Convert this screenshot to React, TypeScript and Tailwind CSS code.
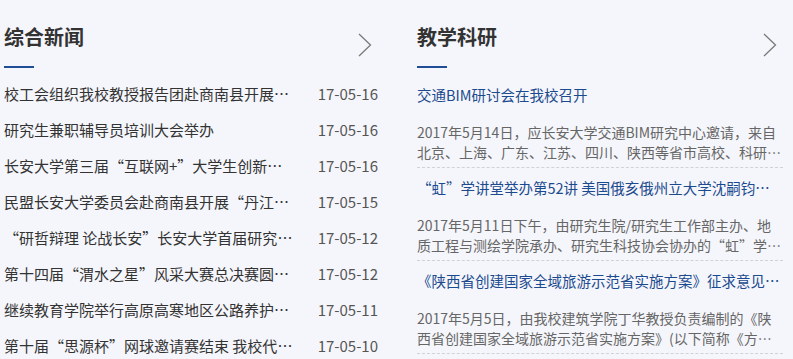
const news = [
  { title: '校工会组织我校教授报告团赴商南县开展送教下乡活动', date: '17-05-16' },
  { title: '研究生兼职辅导员培训大会举办', date: '17-05-16' },
  { title: '长安大学第三届“互联网+”大学生创新创业大赛启动', date: '17-05-16' },
  { title: '民盟长安大学委员会赴商南县开展“丹江情”活动', date: '17-05-15' },
  { title: '“研哲辩理 论战长安”长安大学首届研究生辩论赛', date: '17-05-12' },
  { title: '第十四届“渭水之星”风采大赛总决赛圆满落幕', date: '17-05-12' },
  { title: '继续教育学院举行高原高寒地区公路养护培训班', date: '17-05-11' },
  { title: '第十届“思源杯”网球邀请赛结束 我校代表队获佳绩', date: '17-05-10' },
]

const research = [
  {
    title: '交通BIM研讨会在我校召开',
    desc: '2017年5月14日，应长安大学交通BIM研究中心邀请，来自北京、上海、广东、江苏、四川、陕西等省市高校、科研院所及企业的专家学者齐聚我校',
  },
  {
    title: '“虹”学讲堂举办第52讲 美国俄亥俄州立大学沈嗣钧教授来校讲学',
    desc: '2017年5月11日下午，由研究生院/研究生工作部主办、地质工程与测绘学院承办、研究生科技协会协办的“虹”学讲堂第52讲在我校举行',
  },
  {
    title: '《陕西省创建国家全域旅游示范省实施方案》征求意见稿论证会召开',
    desc: '2017年5月5日，由我校建筑学院丁华教授负责编制的《陕西省创建国家全域旅游示范省实施方案》(以下简称《方案》)征求意见稿论证会召开',
  },
]

const Chevron = () => (
  <svg width="14" height="24" viewBox="0 0 14 24" className="mt-[9px] mr-[6px] shrink-0">
    <polyline points="1,1 12.5,12 1,23" fill="none" stroke="#7a7a7a" strokeWidth="1.3" />
  </svg>
)

const Header = ({ label }: { label: string }) => (
  <div>
    <div className="flex h-[26px] items-start justify-between mt-[24px]">
      <h2 className="text-[20px] leading-[26px] font-bold text-[#333]">{label}</h2>
      <Chevron />
    </div>
    <div className="mt-[16px] h-[2px] w-[30px] bg-[#1f4e96]" />
  </div>
)

export default function App() {
  return (
    <div
      className="flex h-[359px] w-[793px] overflow-hidden bg-[#f5f6fb] pl-[4px]"
      style={{ fontFamily: '"Noto Sans CJK SC", "Noto Sans", sans-serif' }}
    >
      <div className="w-[374px]">
        <Header label="综合新闻" />
        <ul className="mt-[8px]">
          {news.map((n) => (
            <li key={n.title} className="flex h-[36px] items-center text-[15px] text-[#333]">
              <span className="w-[290px] truncate">{n.title}</span>
              <span className="ml-auto text-[#555]">{n.date}</span>
            </li>
          ))}
        </ul>
      </div>
      <div className="ml-[39px] w-[366px]">
        <Header label="教学科研" />
        <div className="mt-[15px]">
          {research.map((r, i) => (
            <div
              key={r.title}
              className={`border-b border-dashed border-[#d0d2d8] pb-[5px] ${i > 0 ? 'mt-[8px]' : ''}`}
            >
              <h3 className="truncate text-[14.5px] leading-[24px] text-[#1c4a8e]">{r.title}</h3>
              <p className="mt-[15px] line-clamp-2 text-[14px] leading-[20px] text-[#666]">{r.desc}</p>
            </div>
          ))}
        </div>
      </div>
    </div>
  )
}
